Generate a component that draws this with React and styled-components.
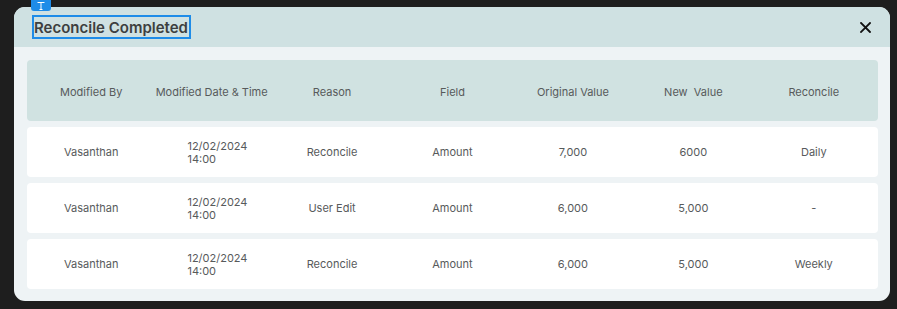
import React from 'react';
import styled, { createGlobalStyle } from 'styled-components';

const GlobalStyle = createGlobalStyle`
  html, body {
    margin: 0;
    padding: 0;
    background: #1e1e1e;
  }
  body {
    font-family: Inter, "Noto Sans", "Liberation Sans", sans-serif;
  }
`;

const Page = styled.div`
  padding: 7px 7px 8px 14px;
  width: 876px;
`;

const Modal = styled.div`
  width: 876px;
  height: 294px;
  border-radius: 11px;
  background: #eef3f5;
  overflow: visible;
  display: flex;
  flex-direction: column;
`;

const Header = styled.div`
  height: 40px;
  flex-shrink: 0;
  background: #cfe1e2;
  border-radius: 11px 11px 0 0;
  display: flex;
  align-items: center;
  justify-content: space-between;
  padding: 0 19px 0 18px;
`;

const Title = styled.h2`
  position: relative;
  margin: 0;
  padding: 1px 1px 0 0;
  border: 2px solid #1e8ce8;
  font-size: 15px;
  font-weight: 600;
  color: #3d3f40;
  line-height: 19px;
`;

const Badge = styled.span`
  position: absolute;
  left: -3px;
  top: -21px;
  width: 20px;
  height: 15px;
  border-radius: 3px;
  background: #1e8ce8;
  display: flex;
  align-items: flex-end;
  justify-content: center;
`;

const Close = styled.button`
  border: none;
  background: none;
  padding: 0;
  width: 12px;
  height: 14px;
  display: flex;
  align-items: center;
  justify-content: center;
  cursor: pointer;
`;

const Body = styled.div`
  padding: 13px 12px 12px 13px;
  display: flex;
  flex-direction: column;
  gap: 6px;
`;

const Row = styled.div`
  display: grid;
  grid-template-columns: repeat(7, 1fr);
  align-items: center;
  padding: ${(p) => (p.head ? '3px 4px 0' : '1px 4px 0')};
  height: ${(p) => (p.head ? '61px' : '50px')};
  box-sizing: border-box;
  background: ${(p) => (p.head ? '#d0e2e1' : '#ffffff')};
  border-radius: 4px;
`;

const Cell = styled.div`
  text-align: center;
  font-size: 11px;
  line-height: 13px;
  color: #575a5b;
`;

const DateCell = styled(Cell)`
  text-align: left;
  padding-left: 36px;
`;

const columns = [
  'Modified By',
  'Modified Date & Time',
  'Reason',
  'Field',
  'Original Value',
  'New\u00a0 Value',
  'Reconcile',
];

const rows = [
  { by: 'Vasanthan', date: '12/02/2024', time: '14:00', reason: 'Reconcile', field: 'Amount', orig: '7,000', next: '6000', rec: 'Daily' },
  { by: 'Vasanthan', date: '12/02/2024', time: '14:00', reason: 'User Edit', field: 'Amount', orig: '6,000', next: '5,000', rec: '-' },
  { by: 'Vasanthan', date: '12/02/2024', time: '14:00', reason: 'Reconcile', field: 'Amount', orig: '6,000', next: '5,000', rec: 'Weekly' },
];

export default function App() {
  return (
    <Page>
      <GlobalStyle />
      <Modal>
        <Header>
          <Title>
            <Badge>
              <svg width="10" height="10" viewBox="0 0 10 10">
                <path d="M1.5 1.5h7M5 1.5v7M3.5 8.5h3" stroke="#fff" strokeWidth="1" fill="none" />
              </svg>
            </Badge>
            Reconcile Completed
          </Title>
          <Close aria-label="Close">
            <svg width="11" height="11" viewBox="0 0 11 11">
              <path d="M1 1l9 9M10 1l-9 9" stroke="#111" strokeWidth="1.8" strokeLinecap="square" />
            </svg>
          </Close>
        </Header>
        <Body>
          <Row head>
            {columns.map((c) => (
              <Cell key={c}>{c}</Cell>
            ))}
          </Row>
          {rows.map((r, i) => (
            <Row key={i}>
              <Cell>{r.by}</Cell>
              <DateCell>
                {r.date}
                <br />
                {r.time}
              </DateCell>
              <Cell>{r.reason}</Cell>
              <Cell>{r.field}</Cell>
              <Cell>{r.orig}</Cell>
              <Cell>{r.next}</Cell>
              <Cell>{r.rec}</Cell>
            </Row>
          ))}
        </Body>
      </Modal>
    </Page>
  );
}
